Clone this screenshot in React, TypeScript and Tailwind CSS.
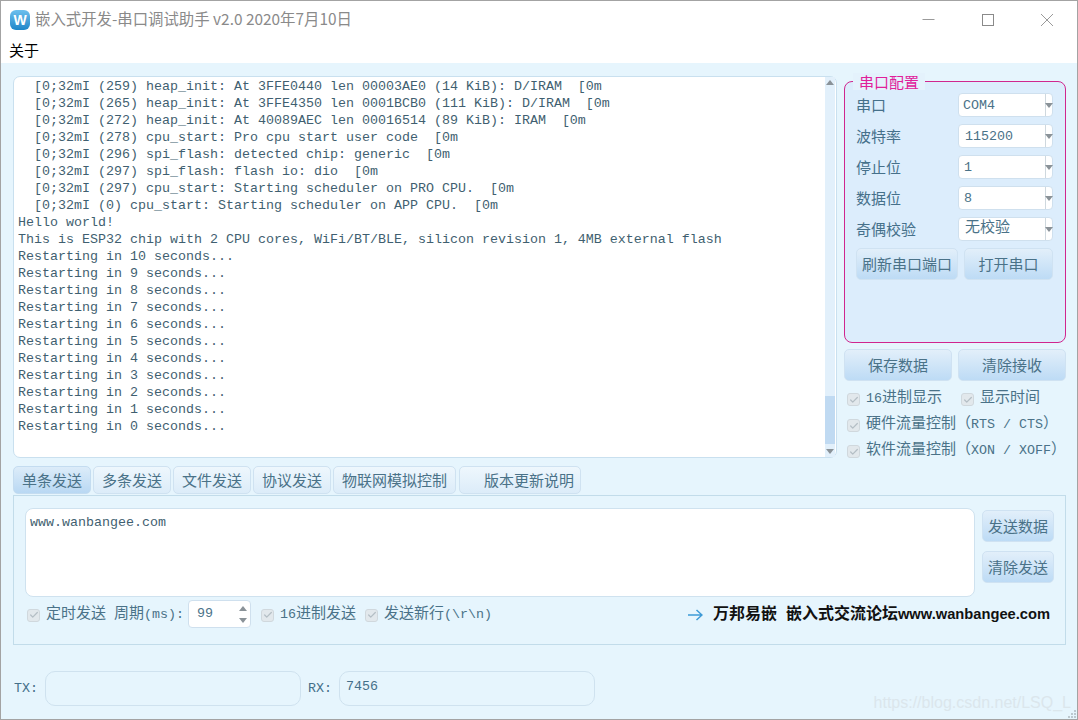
import { Check } from "lucide-react";

const mono = "font-['Liberation_Mono','Noto_Sans_CJK_SC',monospace]";

const logLines = [
  "  [0;32mI (259) heap_init: At 3FFE0440 len 00003AE0 (14 KiB): D/IRAM  [0m",
  "  [0;32mI (265) heap_init: At 3FFE4350 len 0001BCB0 (111 KiB): D/IRAM  [0m",
  "  [0;32mI (272) heap_init: At 40089AEC len 00016514 (89 KiB): IRAM  [0m",
  "  [0;32mI (278) cpu_start: Pro cpu start user code  [0m",
  "  [0;32mI (296) spi_flash: detected chip: generic  [0m",
  "  [0;32mI (297) spi_flash: flash io: dio  [0m",
  "  [0;32mI (297) cpu_start: Starting scheduler on PRO CPU.  [0m",
  "  [0;32mI (0) cpu_start: Starting scheduler on APP CPU.  [0m",
  "Hello world!",
  "This is ESP32 chip with 2 CPU cores, WiFi/BT/BLE, silicon revision 1, 4MB external flash",
  "Restarting in 10 seconds...",
  "Restarting in 9 seconds...",
  "Restarting in 8 seconds...",
  "Restarting in 7 seconds...",
  "Restarting in 6 seconds...",
  "Restarting in 5 seconds...",
  "Restarting in 4 seconds...",
  "Restarting in 3 seconds...",
  "Restarting in 2 seconds...",
  "Restarting in 1 seconds...",
  "Restarting in 0 seconds...",
];

const configRows = [
  { label: "串口", value: "COM4", cls: "pl-[4px] text-[13.33px]" },
  { label: "波特率", value: "115200", cls: "pl-[6px] text-[13.33px]" },
  { label: "停止位", value: "1", cls: "pl-[5px] text-[13.33px]" },
  { label: "数据位", value: "8", cls: "pl-[5px] text-[13.33px]" },
  { label: "奇偶校验", value: "无校验", cls: "pl-[6px] text-[15px]" },
];

const tabs = [
  { label: "单条发送", cls: "w-[78px] border-[#c4dcf0] bg-gradient-to-b from-[#dcecf9] to-[#b9d8f3]" },
  { label: "多条发送", cls: "w-[78px] border-[#cfe2f1] bg-gradient-to-b from-[#eef7fd] to-[#dcecf9]" },
  { label: "文件发送", cls: "w-[78px] border-[#cfe2f1] bg-gradient-to-b from-[#eef7fd] to-[#dcecf9]" },
  { label: "协议发送", cls: "w-[78px] border-[#cfe2f1] bg-gradient-to-b from-[#eef7fd] to-[#dcecf9]" },
  { label: "物联网模拟控制", cls: "w-[123px] border-[#cfe2f1] bg-gradient-to-b from-[#eef7fd] to-[#dcecf9]" },
  { label: "版本更新说明", cls: "ml-[1px] w-[122px] pl-[24px] justify-start border-[#cfe2f1] bg-gradient-to-b from-[#eef7fd] to-[#dcecf9]" },
];

// Latin runs are 8px wide per char, CJK runs 15px, same as the original bitmap font
function Mixed({ text }: { text: string }) {
  const parts = text.split(/([\u3000-\u9fff\uff00-\uffef]+)/);
  return (
    <>
      {parts.map((part, i) =>
        i % 2 === 1 ? (
          <span key={i} className="text-[15px]">
            {part}
          </span>
        ) : (
          <span key={i}>{part}</span>
        ),
      )}
    </>
  );
}

function CheckItem({ label, className = "" }: { label: string; className?: string }) {
  return (
    <div className={`flex shrink-0 items-center text-[13.33px] text-[#4a7288] ${mono} whitespace-pre ${className}`}>
      <span className="mr-[6px] flex h-[13px] w-[13px] shrink-0 items-center justify-center rounded-[3px] border border-[#d0d8dd] bg-[#e2e8ec]">
        <Check className="h-[10px] w-[10px] text-[#b4bec5]" strokeWidth={3} />
      </span>
      <span>
        <Mixed text={label} />
      </span>
    </div>
  );
}

function BlueButton({ label, className = "" }: { label: string; className?: string }) {
  return (
    <button
      className={`flex items-center justify-center rounded-[5px] border border-[#cfe2f2] bg-gradient-to-b from-[#e2effa] to-[#bddbf5] text-[15px] text-[#4a7288] ${className}`}
    >
      {label}
    </button>
  );
}

function ComboBox({ value, cls }: { value: string; cls: string }) {
  return (
    <div className="flex h-[24px] w-[95px] items-center rounded-[4px] border border-[#cfe0ee] bg-white">
      <span className={`flex-1 whitespace-pre pt-[1px] text-[#4a7288] ${mono} ${cls}`}>{value}</span>
      <span className="flex h-full w-[7px] items-center justify-center border-l border-[#cfd8de]">
        <span className="h-0 w-0 border-x-[4px] border-t-[5px] border-x-transparent border-t-[#8a9298]" />
      </span>
    </div>
  );
}

export default function App() {
  return (
    <div className="relative flex h-[720px] w-[1078px] flex-col overflow-hidden border border-[#a3a3a3] bg-white font-['Noto_Sans_CJK_SC',sans-serif]">
      {/* Title bar */}
      <div className="flex h-[37px] shrink-0 items-center pl-[9px]">
        <div className="flex h-[20px] w-[20px] items-center justify-center rounded-[6px] bg-gradient-to-b from-[#6cc0ee] to-[#1b86c8] font-['Liberation_Sans',sans-serif] text-[14px] font-bold leading-none text-white">
          W
        </div>
        <span className="mb-[2px] ml-[5px] text-[15.4px] text-[#8a8a8a]">
          嵌入式开发-串口调试助手 v2.0 2020年7月10日
        </span>
        <div className="ml-auto flex items-center">
          <svg width="14" height="14" viewBox="0 0 14 14" className="mr-[45px]">
            <path d="M0.5 6.5H12.5" stroke="#9a9a9a" strokeWidth="1" />
          </svg>
          <svg width="14" height="14" viewBox="0 0 14 14" className="mr-[45px]">
            <rect x="1.5" y="1.5" width="11" height="11" fill="none" stroke="#8a8a8a" strokeWidth="1" />
          </svg>
          <svg width="14" height="14" viewBox="0 0 14 14" className="mr-[23px]">
            <path d="M1 1L13 13M13 1L1 13" stroke="#9a9a9a" strokeWidth="1" />
          </svg>
        </div>
      </div>

      {/* Menu */}
      <div className="flex h-[25px] shrink-0 items-center pl-[8px] text-[15px] text-black">关于</div>

      {/* Client area */}
      <div className="flex flex-1 flex-col bg-[#e6f5fd] pl-[12px] pr-[11px] pt-[13px]">
        <div className="flex h-[382px] gap-[7px]">
          {/* Receive log */}
          <div className="flex w-[824px] rounded-[7px] border border-[#c9e0ef] bg-white pl-[4px]">
            <pre className={`flex-1 overflow-hidden pt-[1px] text-[13.33px] leading-[17px] text-[#3f5f70] ${mono}`}>
              {logLines.join("\n")}
            </pre>
            <div className="mr-[1px] flex w-[10px] flex-col items-center bg-[#e2f0fb]">
              <span className="mt-[3px] h-0 w-0 border-x-[4px] border-b-[5px] border-x-transparent border-b-[#8a9298]" />
              <div className="mt-auto mb-[2px] h-[48px] w-full bg-[#c0daf2]" />
              <span className="my-[3px] h-0 w-0 border-x-[4px] border-t-[5px] border-x-transparent border-t-[#8a9298]" />
            </div>
          </div>

          {/* Right column */}
          <div className="flex w-[222px] flex-col pt-[5px]">
            <div className="relative h-[262px] shrink-0 rounded-[8px] border border-[#d0268e] bg-[#dcedfc] px-[11px] pt-[11px]">
              <span className="absolute left-[8px] top-[-9px] bg-[#e4f2fc] px-[6px] text-[15px] leading-[17px] text-[#e0209a]">
                串口配置
              </span>
              <div className="flex flex-col gap-[7px]">
                {configRows.map((row) => (
                  <div key={row.label} className="flex h-[24px] items-center justify-between pr-[1px]">
                    <span className="text-[15px] text-[#45708a]">{row.label}</span>
                    <ComboBox value={row.value} cls={row.cls} />
                  </div>
                ))}
              </div>
              <div className="mt-[7px] flex gap-[6px]">
                <BlueButton label="刷新串口端口" className="h-[32px] w-[102px]" />
                <BlueButton label="打开串口" className="h-[32px] w-[89px]" />
              </div>
            </div>
            <div className="mt-[6px] flex shrink-0 gap-[6px]">
              <BlueButton label="保存数据" className="h-[32px] w-[108px]" />
              <BlueButton label="清除接收" className="h-[32px] w-[108px]" />
            </div>
            <div className="mt-[8px] flex shrink-0 flex-col gap-[5px] pl-[3px]">
              <div className="flex h-[21px] gap-[19px]">
                <CheckItem label="16进制显示" />
                <CheckItem label="显示时间" />
              </div>
              <CheckItem label="硬件流量控制（RTS / CTS）" className="h-[21px]" />
              <CheckItem label="软件流量控制（XON / XOFF）" className="h-[21px]" />
            </div>
          </div>
        </div>

        {/* Tabs */}
        <div className="mt-[8px] flex h-[28px] gap-[2px]">
          {tabs.map((tab) => (
            <div
              key={tab.label}
              className={`flex items-center justify-center rounded-[5px] border text-[15px] text-[#4a7288] ${tab.cls}`}
            >
              {tab.label}
            </div>
          ))}
        </div>

        {/* Send pane */}
        <div className="mt-[1px] h-[150px] w-[1053px] border border-[#c2dcea] px-[11px] pt-[12px]">
          <div className="flex gap-[7px]">
            <div className={`h-[89px] w-[950px] rounded-[8px] border border-[#cfe2ef] bg-white px-[4px] pt-[5px] text-[13.33px] leading-[18px] text-[#3f5f70] ${mono}`}>
              www.wanbangee.com
            </div>
            <div className="flex flex-col gap-[9px] pt-[2px]">
              <BlueButton label="发送数据" className="h-[32px] w-[72px]" />
              <BlueButton label="清除发送" className="h-[32px] w-[72px]" />
            </div>
          </div>
          <div className="mt-[2px] flex h-[30px] items-center pl-[2px]">
            <CheckItem label="定时发送 周期(ms):" className="mt-[2px]" />
            <div className="ml-[4px] flex h-[28px] w-[63px] items-center rounded-[4px] border border-[#cfe0ee] bg-white pl-[8px]">
              <span className={`flex-1 text-[13.33px] text-[#4a7288] ${mono}`}>99</span>
              <span className="mr-[3px] flex flex-col gap-[7px]">
                <span className="h-0 w-0 border-x-[4px] border-b-[5px] border-x-transparent border-b-[#8a9298]" />
                <span className="h-0 w-0 border-x-[4px] border-t-[5px] border-x-transparent border-t-[#8a9298]" />
              </span>
            </div>
            <CheckItem label="16进制发送" className="ml-[10px] mt-[2px]" />
            <CheckItem label="发送新行(\r\n)" className="ml-[9px] mt-[2px]" />
            <svg width="16" height="14" viewBox="0 0 16 14" className="ml-auto mt-[2px]">
              <path d="M1 7H15M9.5 2L15 7L9.5 12" fill="none" stroke="#3d9ad6" strokeWidth="1.5" />
            </svg>
            <span className="ml-[10px] mr-[4px] whitespace-pre font-['Liberation_Sans','Noto_Sans_CJK_SC',sans-serif] text-[14.7px] font-bold text-[#111111]">
              <span className="text-[16px]">万邦易嵌  嵌入式交流论坛</span>www.wanbangee.com
            </span>
          </div>
        </div>

        {/* TX / RX counters */}
        <div className={`mt-[26px] flex items-center text-[13.33px] text-[#45708a] ${mono}`}>
          <span className="ml-[1px] w-[31px]">TX:</span>
          <div className="h-[35px] w-[256px] rounded-[10px] border border-[#cfe2ef]" />
          <span className="ml-[7px] w-[31px]">RX:</span>
          <div className="h-[35px] w-[256px] rounded-[10px] border border-[#cfe2ef] pl-[6px] pt-[5px]">7456</div>
        </div>
      </div>

      {/* Blog watermark */}
      <span className="absolute bottom-[8px] right-[6px] font-['Liberation_Sans',sans-serif] text-[16px] leading-none text-[#dbe6ec]">
        https://blog.csdn.net/LSQ_L
      </span>
      {/* Resize grip */}
      <div className="absolute bottom-[1px] right-[1px] grid grid-cols-3 gap-[1px]">
        <span />
        <span />
        <span className="h-[2px] w-[2px] bg-[#bcc8cf]" />
        <span />
        <span className="h-[2px] w-[2px] bg-[#bcc8cf]" />
        <span className="h-[2px] w-[2px] bg-[#bcc8cf]" />
        <span className="h-[2px] w-[2px] bg-[#bcc8cf]" />
        <span className="h-[2px] w-[2px] bg-[#bcc8cf]" />
        <span className="h-[2px] w-[2px] bg-[#bcc8cf]" />
      </div>
    </div>
  );
}
